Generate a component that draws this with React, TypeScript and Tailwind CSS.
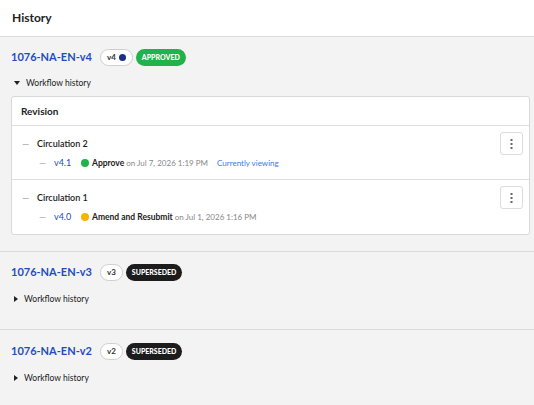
import React from "react";

type Step = {
  version: string;
  dot: string;
  action: string;
  date: string;
  current?: boolean;
};

type Circulation = {
  name: string;
  step: Step;
};

const circulations: Circulation[] = [
  {
    name: "Circulation 2",
    step: { version: "v4.1", dot: "bg-[#21b24b]", action: "Approve", date: "on Jul 7, 2026 1:19 PM", current: true },
  },
  {
    name: "Circulation 1",
    step: { version: "v4.0", dot: "bg-[#f7b500]", action: "Amend and Resubmit", date: "on Jul 1, 2026 1:16 PM" },
  },
];

const Kebab: React.FC = () => (
  <button className="flex h-[23px] w-[23px] items-center justify-center rounded-[3px] border border-[#dcdcdc] bg-white">
    <svg width="3" height="10" viewBox="0 0 3 10" fill="#666">
      <rect x="0.5" y="0" width="2" height="2" />
      <rect x="0.5" y="4" width="2" height="2" />
      <rect x="0.5" y="8" width="2" height="2" />
    </svg>
  </button>
);

const VersionPill: React.FC<{ label: string; dot?: boolean }> = ({ label, dot }) => (
  <span className="flex h-[17px] items-center gap-[3px] rounded-full border border-[#cfcfcf] bg-white px-[6px] text-[8px] font-bold text-[#333]">
    {label}
    {dot && <span className="h-[7px] w-[7px] rounded-full bg-[#1b2f86]" />}
  </span>
);

const StatusBadge: React.FC<{ label: string; color: string }> = ({ label, color }) => (
  <span className={`flex h-[17px] items-center rounded-full px-[6px] text-[7px] font-black text-white ${color}`}>
    {label}
  </span>
);

const DocTitle: React.FC<{ name: string; version: string; status: string; color: string; dot?: boolean }> = ({
  name,
  version,
  status,
  color,
  dot,
}) => (
  <div className="flex h-4 items-center whitespace-nowrap">
    <span className="mr-[8px] text-[11px] font-bold text-[#1d4dbf]">{name}</span>
    <div className="flex items-center gap-[3px]">
      <VersionPill label={version} dot={dot} />
      <StatusBadge label={status} color={color} />
    </div>
  </div>
);

const WorkflowToggle: React.FC<{ open?: boolean }> = ({ open }) => (
  <div className="flex h-4 items-center gap-[6px] pl-[3px] text-[8.5px] text-[#222]">
    {open ? (
      <svg width="6" height="4" viewBox="0 0 6 4" fill="#222">
        <path d="M0 0 H6 L3 4 Z" />
      </svg>
    ) : (
      <svg width="4" height="6" viewBox="0 0 4 6" fill="#222">
        <path d="M0 0 V6 L4 3 Z" />
      </svg>
    )}
    <span>Workflow history</span>
  </div>
);

const RevisionCard: React.FC = () => (
  <div className="rounded-[3px] border border-[#d9d9d9] bg-white">
    <div className="flex h-[29px] items-center border-b border-[#dedede] px-[9px] text-[10px] font-bold text-[#222]">
      Revision
    </div>
    {circulations.map((c, i) => (
      <div
        key={c.name}
        className={`flex h-[54px] justify-between pl-[10px] pr-[6px] pt-[6px] ${i === 0 ? "border-b border-[#dedede]" : ""}`}
      >
        <div className="flex flex-col whitespace-nowrap">
          <div className="flex h-6 items-center text-[9px] font-semibold text-[#222]">
            <span className="w-[15px] text-[#aaa]">—</span>
            <span>{c.name}</span>
          </div>
          <div className="flex h-[14px] items-center pl-[17px] text-[9px]">
            <span className="w-[15px] text-[#aaa]">—</span>
            <span className="w-[27px] text-[#1d4dbf]">{c.step.version}</span>
            <span className={`mr-[3px] h-[8px] w-[8px] rounded-full ${c.step.dot}`} />
            <span className="text-[8.5px] font-bold text-[#222]">{c.step.action}</span>
            <span className="ml-[2px] text-[8px] text-[#888]">{c.step.date}</span>
            {c.step.current && <span className="ml-[9px] text-[8px] text-[#3b7be4]">Currently viewing</span>}
          </div>
        </div>
        <Kebab />
      </div>
    ))}
  </div>
);

export default function App() {
  return (
    <div className="min-h-[405px] w-[534px] bg-[#f3f3f3] font-['Lato',sans-serif]">
      <div className="flex h-[37px] items-center border-b border-[#dcdcdc] bg-white px-3 text-[12px] font-bold text-[#222]">
        History
      </div>

      <div className="border-b border-[#dcdcdc] px-[11px] pb-[16px] pt-[12px]">
        <DocTitle name="1076-NA-EN-v4" version="v4" status="APPROVED" color="bg-[#22b24b]" dot />
        <div className="mt-[10px]">
          <WorkflowToggle open />
        </div>
        <div className="mr-[-7px] mt-[5px]">
          <RevisionCard />
        </div>
      </div>

      <div className="border-b border-[#dcdcdc] px-[11px] pb-[22px] pt-[12px]">
        <DocTitle name="1076-NA-EN-v3" version="v3" status="SUPERSEDED" color="bg-[#1c1c1c]" />
        <div className="mt-[11px]">
          <WorkflowToggle />
        </div>
      </div>

      <div className="px-[11px] pb-[22px] pt-[13px]">
        <DocTitle name="1076-NA-EN-v2" version="v2" status="SUPERSEDED" color="bg-[#1c1c1c]" />
        <div className="mt-[11px]">
          <WorkflowToggle />
        </div>
      </div>
    </div>
  );
}
